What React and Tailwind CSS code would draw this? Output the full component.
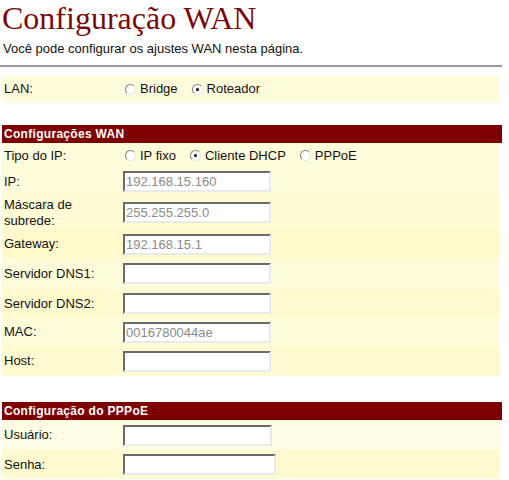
import React from "react";

const sans = { fontFamily: "'Liberation Sans', Arial, sans-serif" };

function Radio({ checked }) {
  return (
    <span className="relative inline-block ml-[2px] w-[11px] h-[11px] rounded-full border border-t-[#808080] border-l-[#808080] border-b-[#e6e6e6] border-r-[#e6e6e6] bg-white shrink-0">
      {checked && (
        <span className="absolute left-[3px] top-[3px] w-[3px] h-[3px] rounded-full bg-black" />
      )}
    </span>
  );
}

function Option({ checked, label }) {
  return (
    <span className="flex items-center gap-[4px] mr-[12px]">
      <Radio checked={checked} />
      <span>{label}</span>
    </span>
  );
}

function Field({ value = "", width = "w-[148px]" }) {
  return (
    <div
      className={`${width} h-[21px] bg-white border-2 border-t-[#6b6b6b] border-l-[#6b6b6b] border-b-[#eaeaea] border-r-[#eaeaea] flex items-center pl-[1px] text-[#8a8a8a] text-[13px] leading-none`}
    >
      {value}
    </div>
  );
}

function Row({ label, children, h = "h-[27px]", bg = "bg-[#fffcdc]" }) {
  return (
    <div className={`flex items-center ${h} ${bg} w-[498px] ml-[2px]`}>
      <div className="w-[121px] pl-[2px] leading-[16px]">{label}</div>
      <div className="flex items-center">{children}</div>
    </div>
  );
}

function SectionHeader({ title }) {
  return (
    <div className="ml-[2px] w-[500px] h-[18px] bg-[#7f0000] text-white text-[12px] font-bold flex items-center pl-[2px] tracking-[0.3px]">
      {title}
    </div>
  );
}

export default function App() {
  return (
    <div className="w-[509px] h-[480px] bg-white text-[13px] text-[#111] overflow-hidden" style={sans}>
      <h1
        className="text-[32px] leading-[32px] text-[#7a0a0a] pl-[2px] pt-[2px] font-normal"
        style={{ fontFamily: "'Liberation Serif', 'DejaVu Serif', 'Times New Roman', serif" }}
      >
        Configuração WAN
      </h1>
      <p className="pl-[3px] mt-[7px] leading-[15px]">Você pode configurar os ajustes WAN nesta página.</p>
      <div className="mt-[9px] w-[502px] border-t-2 border-[#9a9a9a]" />

      <div className="mt-[9px]">
        <Row label="LAN:" h="h-[26px]">
          <Option label="Bridge" />
          <Option checked label="Roteador" />
        </Row>
      </div>

      <div className="mt-[23px]">
        <SectionHeader title="Configurações WAN" />
        <Row label="Tipo do IP:" h="h-[25px]">
          <Option label="IP fixo" />
          <Option checked label="Cliente DHCP" />
          <Option label="PPPoE" />
        </Row>
        <Row label="IP:" h="h-[27px]">
          <Field value="192.168.15.160" />
        </Row>
        <Row label={<>Máscara de<br />subrede:</>} h="h-[35px]" bg="bg-[#fffbd4]">
          <Field value="255.255.255.0" />
        </Row>
        <Row label="Gateway:" h="h-[28px]" bg="bg-[#fff9cc]">
          <Field value="192.168.15.1" />
        </Row>
        <Row label="Servidor DNS1:" h="h-[31px]">
          <Field />
        </Row>
        <Row label="Servidor DNS2:" h="h-[29px]" bg="bg-[#fffad0]">
          <Field />
        </Row>
        <Row label="MAC:" h="h-[28px]">
          <Field value="0016780044ae" />
        </Row>
        <Row label="Host:" h="h-[30px]" bg="bg-[#fffad0]">
          <Field />
        </Row>
      </div>

      <div className="mt-[26px]">
        <SectionHeader title="Configuração do PPPoE" />
        <Row label="Usuário:" h="h-[30px]" bg="bg-[#fffde4]">
          <Field width="w-[149px]" />
        </Row>
        <Row label="Senha:" h="h-[29px]" bg="bg-[#fffad0]">
          <Field width="w-[153px]" />
        </Row>
      </div>
    </div>
  );
}
